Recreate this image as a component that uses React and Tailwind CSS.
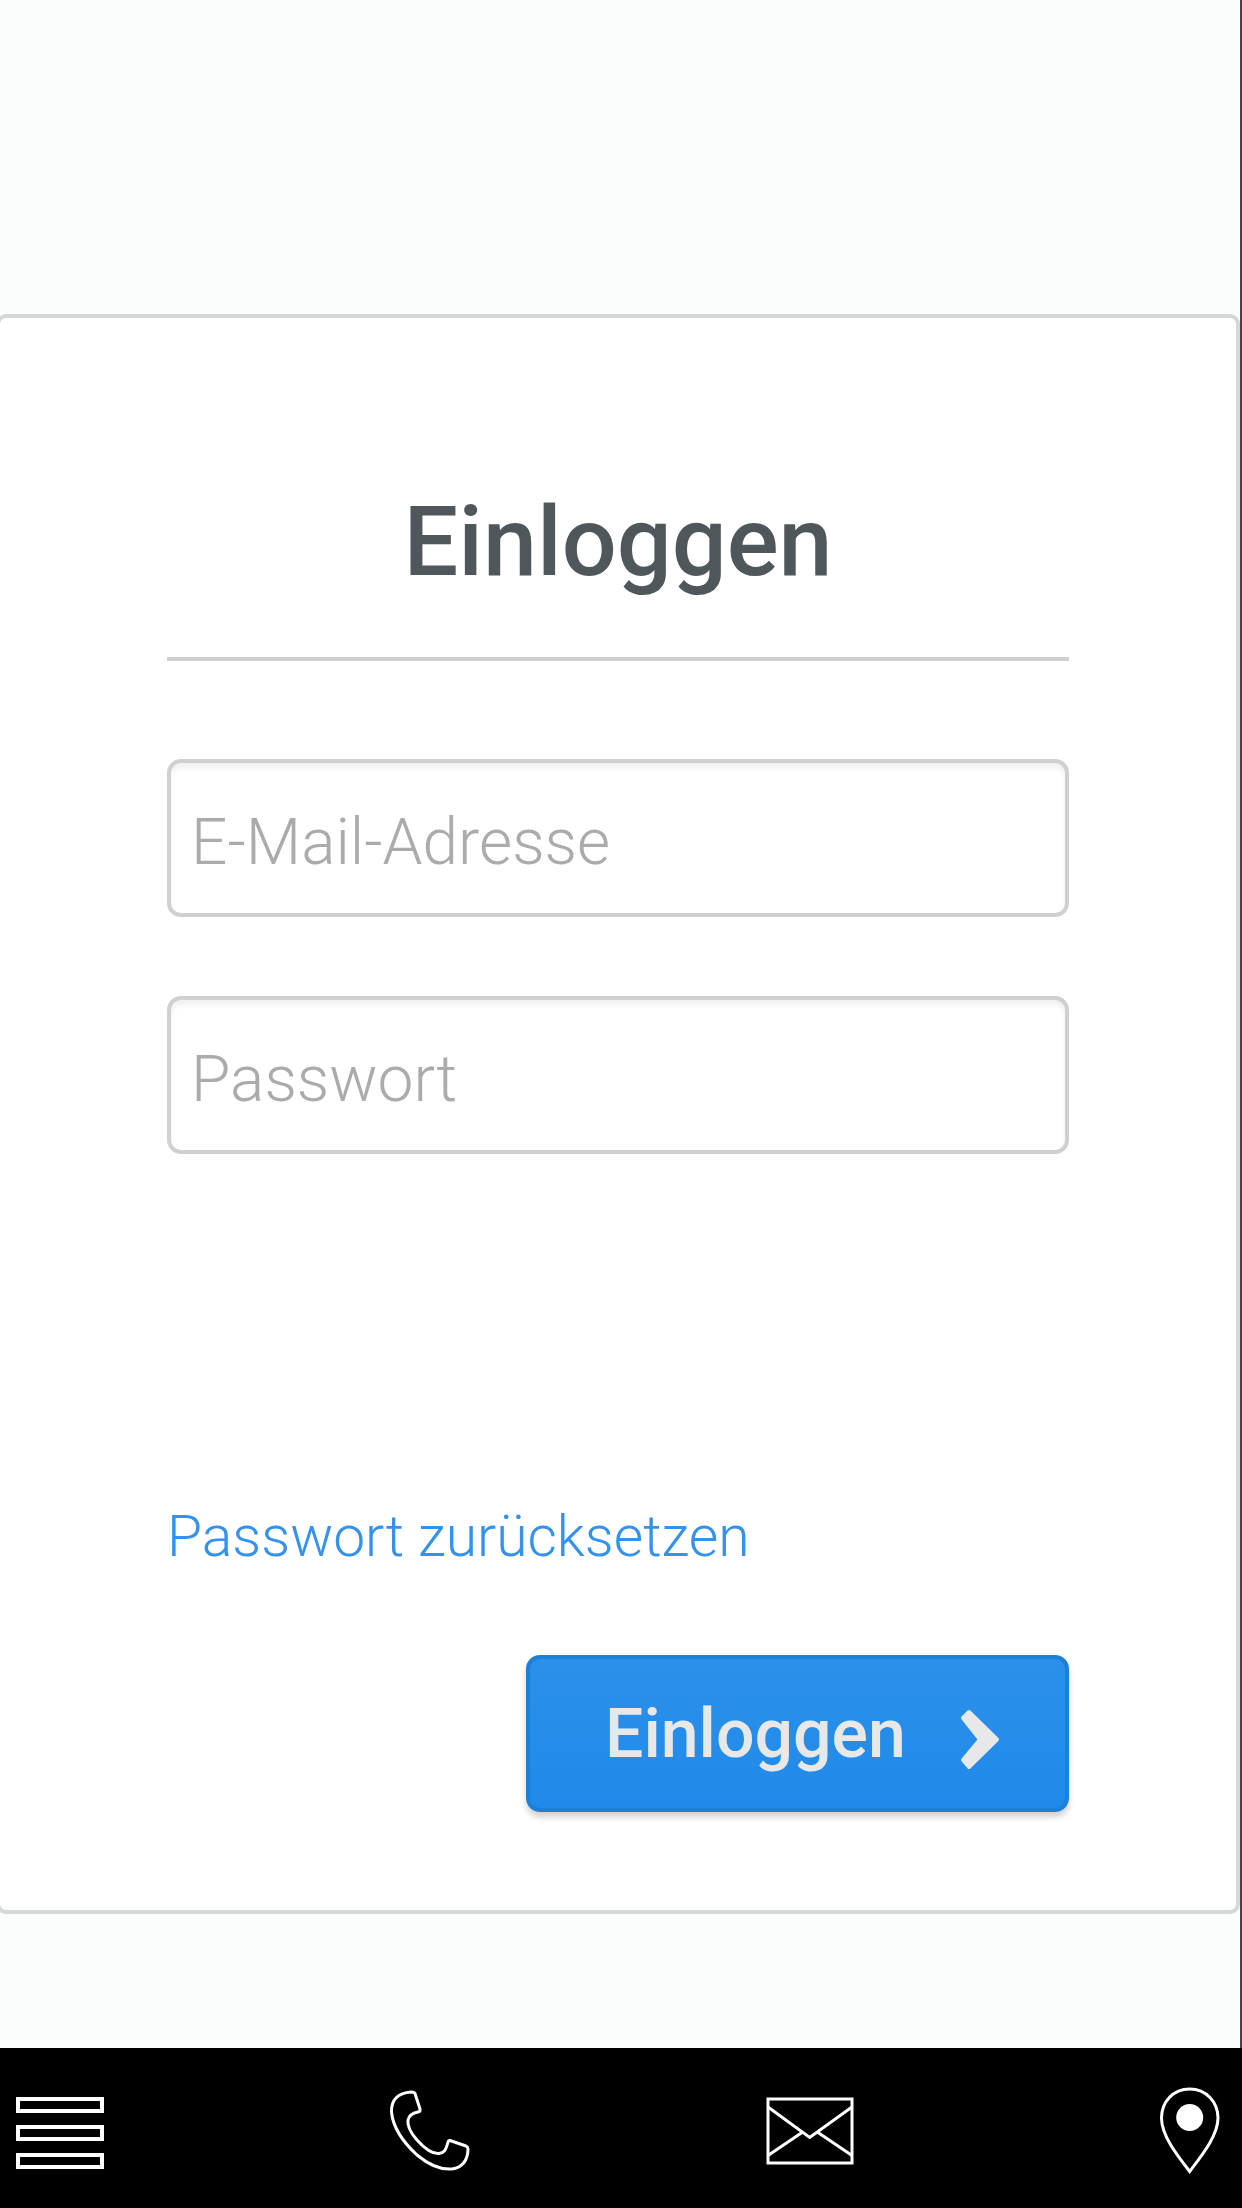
import React from 'react';

const inputClass =
  'block w-full h-[158px] rounded-[14px] border-4 border-[#d0d0d0] bg-white px-[20px] pt-[8px] text-[64px] font-light text-[#555] placeholder:text-[#ababab] placeholder:opacity-100 shadow-[inset_0_5px_5px_rgba(0,0,0,0.06)] outline-none';

function MenuIcon() {
  return (
    <svg width="88" height="100" viewBox="0 0 88 100" fill="none" stroke="#fff" strokeWidth="4">
      <rect x="2" y="21" width="84" height="12" />
      <rect x="2" y="49" width="84" height="12" />
      <rect x="2" y="77" width="84" height="12" />
    </svg>
  );
}

function PhoneIcon() {
  return (
    <svg width="100" height="100" viewBox="0 0 100 100" fill="none" stroke="#fff" strokeWidth="3" strokeLinejoin="round">
      <path d="M29 14C16 15 9 22 9.500 34C11 50 22 65 35 77C47 87 58 92 70 91C80 90 86 82 86 71Q86 69 84 68L68 62.500Q66.500 62 66 64C64 72 62 75 57 75.500C51 76 43 71 35 62C28 54 25 48 26 42C27 37 31 35 36 34Q38.500 33.500 38 31L33 15.500Q32.500 14 29 14Z" />
    </svg>
  );
}

function MailIcon() {
  return (
    <svg width="100" height="100" viewBox="0 0 100 100" fill="none" stroke="#fff" strokeWidth="3">
      <rect x="8" y="21" width="84" height="64" />
      <path d="M8 29L49.700 59.500L92 29M8 77.500L42 54.500M58 54.500L92 77.500" />
    </svg>
  );
}

function PinIcon() {
  return (
    <svg width="100" height="100" viewBox="0 0 100 100" fill="none">
      <path
        d="M51.700 11C35 11 23.500 24 23.500 40C23.500 57 38 76 51.700 93.500C65 76 80 57 80 40C80 24 68 11 51.700 11Z"
        stroke="#fff"
        strokeWidth="3"
      />
      <circle cx="51.700" cy="39.500" r="13.500" fill="#fff" />
    </svg>
  );
}

const navItems = [
  { label: 'Menü', icon: MenuIcon },
  { label: 'Telefon', icon: PhoneIcon },
  { label: 'E-Mail', icon: MailIcon },
  { label: 'Standort', icon: PinIcon },
];

export default function App() {
  return (
    <div className="min-h-screen flex flex-col bg-[#fbfdfd] font-['Roboto',sans-serif]">
      <main className="flex-1 pt-[314px] border-r-2 border-[#444]">
        {/* Login card */}
        <form
          onSubmit={(e) => e.preventDefault()}
          className="-ml-1 rounded-[10px] border-4 border-[#d6d8d8] bg-white px-[167px] pt-[176px] pb-[98px]"
        >
          <h1 className="pb-[67px] border-b-4 border-[#d0d0d0] text-center text-[97px] leading-[96px] font-medium text-[#50575b]">
            Einloggen
          </h1>

          <div className="mt-[98px] space-y-[79px]">
            <input type="email" aria-label="E-Mail-Adresse" placeholder="E-Mail-Adresse" className={inputClass} />
            <input type="password" aria-label="Passwort" placeholder="Passwort" className={inputClass} />
          </div>

          <a href="#reset" className="block w-fit mt-[351px] text-[57px] leading-[64px] font-light text-[#3492ed]">
            Passwort zurücksetzen
          </a>

          <button
            type="submit"
            className="flex items-center justify-between ml-auto mt-[86px] w-[543px] h-[157px] pl-[75px] pr-[65px] rounded-[14px] border-4 border-[#1c7fd8] bg-linear-to-b from-[#2b90ea] to-[#1f8ae9] text-[68px] font-medium text-[#e8e8e8] shadow-[0_5px_6px_rgba(0,0,0,0.18)]"
          >
            Einloggen
            <svg width="40" height="76" viewBox="0 0 40 76" fill="#e8e8e8" stroke="#e8e8e8" strokeWidth="4" strokeLinejoin="round">
              <path d="M3 22L9 16L37 43.500L9 71L3 64L20 43.500Z" />
            </svg>
          </button>
        </form>
      </main>

      {/* Bottom bar */}
      <nav className="h-[160px] flex items-center justify-between pl-4 pr-1 bg-black">
        {navItems.map(({ label, icon: Icon }) => (
          <a key={label} href="#nav" aria-label={label}>
            <Icon />
          </a>
        ))}
      </nav>
    </div>
  );
}
